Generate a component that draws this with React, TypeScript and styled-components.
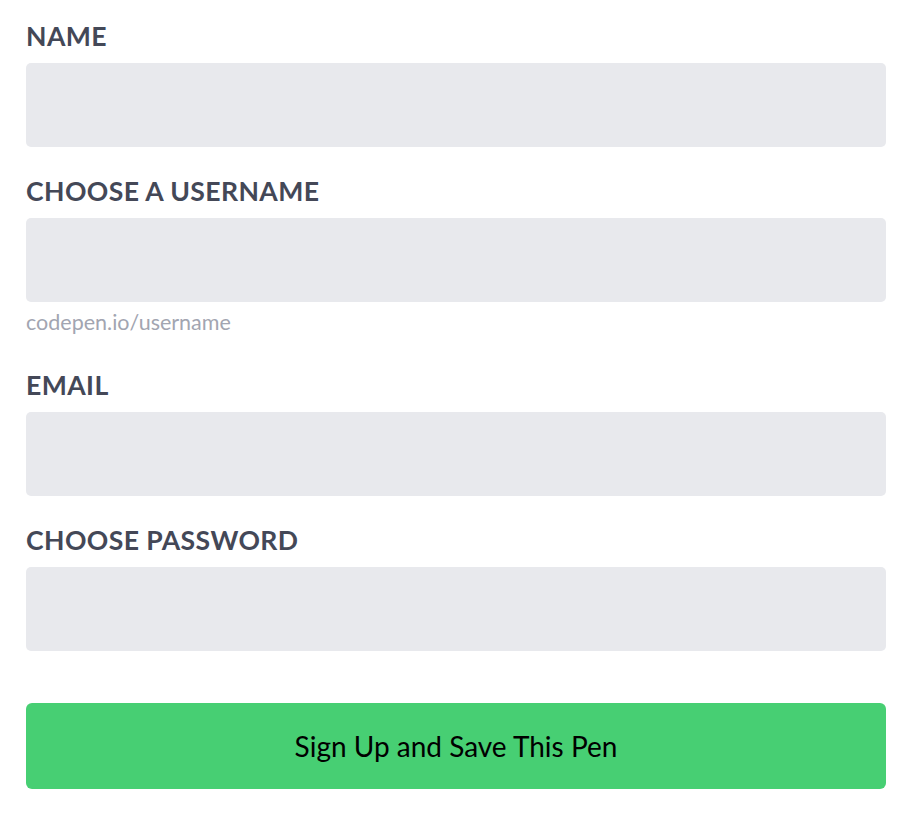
import React from "react";
import styled, { createGlobalStyle } from "styled-components";

const GlobalStyle = createGlobalStyle`
  html, body {
    margin: 0;
    padding: 0;
    background: #ffffff;
  }
  * { box-sizing: border-box; }
`;

const Form = styled.form`
  display: flex;
  flex-direction: column;
  padding: 21px 20px 0 26px;
  width: 906px;
  font-family: Lato, "Open Sans", sans-serif;
`;

const Field = styled.div<{ $extra?: number }>`
  display: flex;
  flex-direction: column;
  margin-bottom: ${(p) => 29 + (p.$extra ?? 0)}px;
`;

const Label = styled.label`
  display: block;
  font-size: 26.6px;
  line-height: 31px;
  font-weight: 700;
  letter-spacing: 0.4px;
  color: #444857;
  text-transform: uppercase;
  margin-bottom: 11px;
`;

const Input = styled.input`
  display: block;
  width: 860px;
  height: 84px;
  border: none;
  border-radius: 5px;
  background: #e8e9ed;
  outline: none;
  padding: 0 16px;
  font-family: inherit;
  font-size: 26px;
`;

const Help = styled.div`
  margin-top: 7px;
  font-size: 21.5px;
  line-height: 26px;
  color: #a2a5b1;
`;

const Button = styled.button`
  margin-top: 23px;
  width: 860px;
  height: 86px;
  border: none;
  border-radius: 6px;
  background: #47cf73;
  color: #000000;
  font-family: Lato, "Open Sans", sans-serif;
  font-size: 28px;
  font-weight: 400;
  cursor: pointer;
`;

export default function App() {
  return (
    <>
      <GlobalStyle />
      <Form onSubmit={(e) => e.preventDefault()}>
        <Field>
          <Label>Name</Label>
          <Input type="text" />
        </Field>
        <Field $extra={6}>
          <Label>Choose a Username</Label>
          <Input type="text" />
          <Help>codepen.io/username</Help>
        </Field>
        <Field>
          <Label>Email</Label>
          <Input type="email" />
        </Field>
        <Field>
          <Label>Choose Password</Label>
          <Input type="password" />
        </Field>
        <Button type="submit">Sign Up and Save This Pen</Button>
      </Form>
    </>
  );
}
